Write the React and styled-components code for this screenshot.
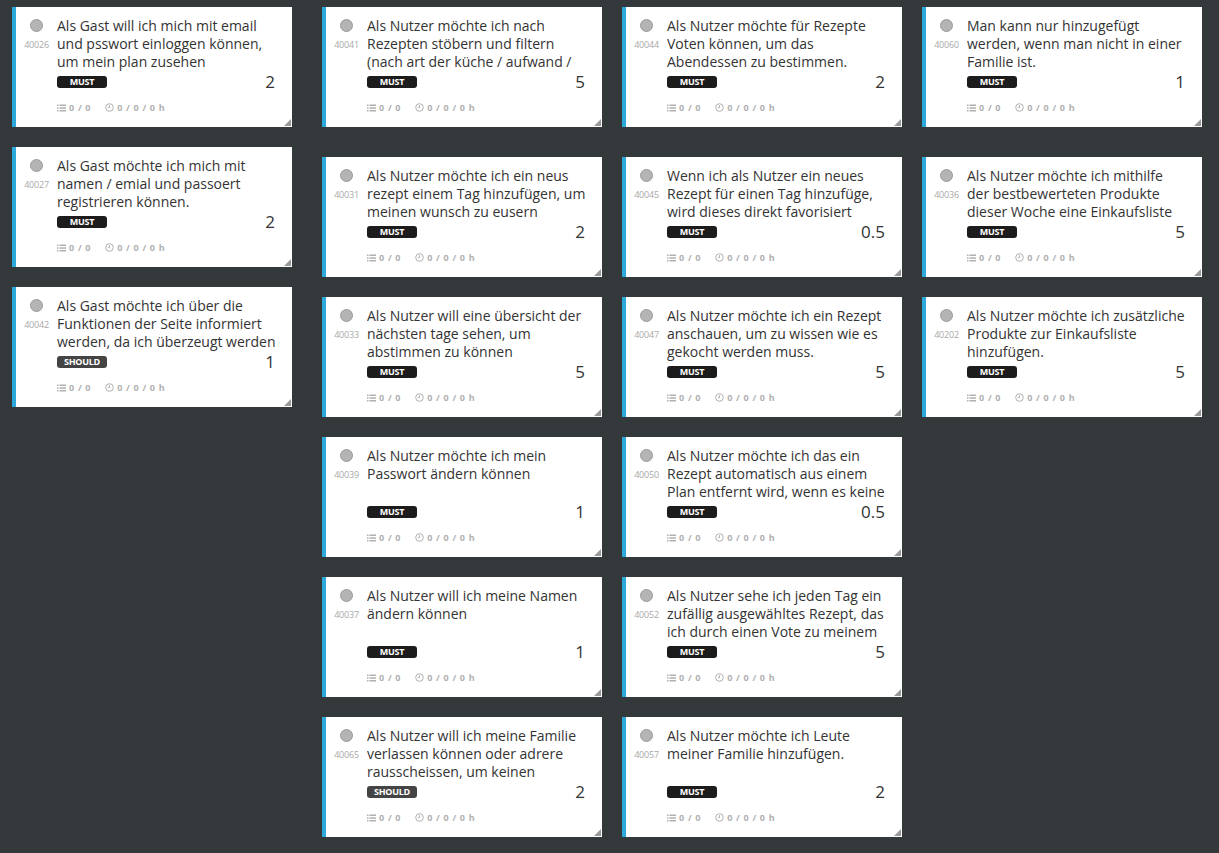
import React from 'react'
import styled, { createGlobalStyle } from 'styled-components'

//Data
const firstColumn = [
    { id: 40026, title: 'Als Gast will ich mich mit email und psswort einloggen können, um mein plan zusehen', prio: 'MUST', points: '2' },
    { id: 40027, title: 'Als Gast möchte ich mich mit namen / emial und passoert registrieren können.', prio: 'MUST', points: '2' },
    { id: 40042, title: 'Als Gast möchte ich über die Funktionen der Seite informiert werden, da ich überzeugt werden möchte.', prio: 'SHOULD', points: '1' },
]

const topRow = [
    { id: 40041, title: 'Als Nutzer möchte ich nach Rezepten stöbern und filtern (nach art der küche / aufwand / zeit)', prio: 'MUST', points: '5' },
    { id: 40044, title: 'Als Nutzer möchte für Rezepte Voten können, um das Abendessen zu bestimmen.', prio: 'MUST', points: '2' },
    { id: 40060, title: 'Man kann nur hinzugefügt werden, wenn man nicht in einer Familie ist.', prio: 'MUST', points: '1' },
]

const lanes = [
    [
        { id: 40031, title: 'Als Nutzer möchte ich ein neus rezept einem Tag hinzufügen, um meinen wunsch zu eusern', prio: 'MUST', points: '2' },
        { id: 40033, title: 'Als Nutzer will eine übersicht der nächsten tage sehen, um abstimmen zu können', prio: 'MUST', points: '5' },
        { id: 40039, title: 'Als Nutzer möchte ich mein Passwort ändern können', prio: 'MUST', points: '1' },
        { id: 40037, title: 'Als Nutzer will ich meine Namen ändern können', prio: 'MUST', points: '1' },
        { id: 40065, title: 'Als Nutzer will ich meine Familie verlassen können oder adrere rausscheissen, um keinen Familienstreit zu haben', prio: 'SHOULD', points: '2' },
    ],
    [
        { id: 40045, title: 'Wenn ich als Nutzer ein neues Rezept für einen Tag hinzufüge, wird dieses direkt favorisiert', prio: 'MUST', points: '0.5' },
        { id: 40047, title: 'Als Nutzer möchte ich ein Rezept anschauen, um zu wissen wie es gekocht werden muss.', prio: 'MUST', points: '5' },
        { id: 40050, title: 'Als Nutzer möchte ich das ein Rezept automatisch aus einem Plan entfernt wird, wenn es keine Stimmen hat', prio: 'MUST', points: '0.5' },
        { id: 40052, title: 'Als Nutzer sehe ich jeden Tag ein zufällig ausgewähltes Rezept, das ich durch einen Vote zu meinem Plan hinzufügen kann', prio: 'MUST', points: '5' },
        { id: 40057, title: 'Als Nutzer möchte ich Leute meiner Familie hinzufügen.', prio: 'MUST', points: '2' },
    ],
    [
        { id: 40036, title: 'Als Nutzer möchte ich mithilfe der bestbewerteten Produkte dieser Woche eine Einkaufsliste erstellen', prio: 'MUST', points: '5' },
        { id: 40202, title: 'Als Nutzer möchte ich zusätzliche Produkte zur Einkaufsliste hinzufügen.', prio: 'MUST', points: '5' },
    ],
]

//Styles
const GlobalStyle = createGlobalStyle`
    html, body {
        margin: 0;
        background: #33383b;
        font-family: "Open Sans", "Liberation Sans", sans-serif;
    }
`
const Page = styled.div`
    display: flex;
    gap: 30px;
    padding: 7px 12px;
    min-height: 853px;
    box-sizing: border-box;
    background: #33383b;
`
const Stack = styled.div`
    display: flex;
    flex-direction: column;
    gap: 20px;
`
const Board = styled.div`
    display: flex;
    flex-direction: column;
    gap: 30px;
`
const Row = styled.div`
    display: flex;
    gap: 20px;
    align-items: flex-start;
`
const CardBox = styled.div`
    position: relative;
    display: flex;
    width: 280px;
    height: 120px;
    box-sizing: border-box;
    background: #fff;
    border-left: 4px solid #2ca8db;
`
const Side = styled.div`
    width: 41px;
    display: flex;
    flex-direction: column;
    align-items: center;
    padding-top: 12px;
`
const Dot = styled.span`
    width: 11px;
    height: 11px;
    border-radius: 50%;
    background: #b4b4b4;
    border: 1px solid #9a9a9a;
`
const CardId = styled.span`
    margin-top: 6px;
    font-size: 9px;
    color: #a8a8a8;
    letter-spacing: -0.2px;
`
const Main = styled.div`
    flex: 1;
    display: flex;
    flex-direction: column;
    padding: 10px 15px 0 0;
    min-width: 0;
`
const Title = styled.div`
    height: 54px;
    overflow: hidden;
    font-size: 14px;
    line-height: 18px;
    color: #333;
`
const Meta = styled.div`
    display: flex;
    justify-content: space-between;
    align-items: center;
    height: 20px;
    margin-top: 1px;
`
const Badge = styled.span`
    width: 50px;
    height: 12px;
    line-height: 12px;
    border-radius: 3px;
    background: ${p => (p.$prio === 'SHOULD' ? '#444' : '#1c1c1c')};
    color: #fff;
    font-size: 9px;
    font-weight: 700;
    text-align: center;
    letter-spacing: -0.3px;
`
const Points = styled.span`
    font-size: 17px;
    line-height: 20px;
    color: #333;
    margin-right: 2px;
`
const Footer = styled.div`
    display: flex;
    gap: 14px;
    margin-top: 9px;
`
const Stat = styled.span`
    display: flex;
    align-items: center;
    gap: 3px;
    font-size: 9px;
    font-weight: 700;
    color: #b0b0b0;
    letter-spacing: 0.7px;
`
const Corner = styled.span`
    position: absolute;
    right: 1px;
    bottom: 1px;
    width: 0;
    height: 0;
    border-left: 7px solid transparent;
    border-bottom: 7px solid #999;
`

//Icons
const ListIcon = () => (
    <svg width="9" height="8" viewBox="0 0 9 8" fill="#b0b0b0">
        <rect x="0" y="0.5" width="1.5" height="1.5" />
        <rect x="2.5" y="0.5" width="6.5" height="1.5" />
        <rect x="0" y="3.3" width="1.5" height="1.5" />
        <rect x="2.5" y="3.3" width="6.5" height="1.5" />
        <rect x="0" y="6" width="1.5" height="1.5" />
        <rect x="2.5" y="6" width="6.5" height="1.5" />
    </svg>
)

const ClockIcon = () => (
    <svg width="9" height="9" viewBox="0 0 9 9" fill="none" stroke="#b0b0b0" strokeWidth="1">
        <circle cx="4.5" cy="4.5" r="3.8" />
        <path d="M4.5 2.2V4.7H2.8" />
    </svg>
)

//Components
function Card({ item }) {
    return (
        <CardBox>
            <Side>
                <Dot />
                <CardId>{item.id}</CardId>
            </Side>
            <Main>
                <Title>{item.title}</Title>
                <Meta>
                    <Badge $prio={item.prio}>{item.prio}</Badge>
                    <Points>{item.points}</Points>
                </Meta>
                <Footer>
                    <Stat><ListIcon />0 / 0</Stat>
                    <Stat><ClockIcon />0 / 0 / 0 h</Stat>
                </Footer>
            </Main>
            <Corner />
        </CardBox>
    )
}

export default function App() {
    return (
        <>
            <GlobalStyle />
            <Page>
                <Stack>
                    {firstColumn.map(item => <Card key={item.id} item={item} />)}
                </Stack>
                <Board>
                    <Row>
                        {topRow.map(item => <Card key={item.id} item={item} />)}
                    </Row>
                    <Row>
                        {lanes.map((lane, i) => (
                            <Stack key={i}>
                                {lane.map(item => <Card key={item.id} item={item} />)}
                            </Stack>
                        ))}
                    </Row>
                </Board>
            </Page>
        </>
    )
}
